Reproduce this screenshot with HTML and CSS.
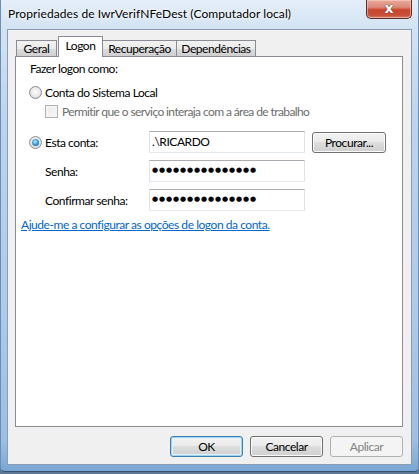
FILE: index.html
```html
<!DOCTYPE html>
<html lang="pt">
<head>
<meta charset="utf-8">
<title>Propriedades</title>
<link rel="stylesheet" href="styles.css">
</head>
<body>
<div class="window">
  <div class="titlebar">
    <span class="title">Propriedades de IwrVerifNFeDest (Computador local)</span>
    <div class="close"><span>x</span></div>
  </div>
  <div class="client">
    <div class="tabs">
      <div class="tab t-geral">Geral</div>
      <div class="tab sel t-logon">Logon</div>
      <div class="tab t-rec">Recuperação</div>
      <div class="tab t-dep">Dependências</div>
    </div>
    <div class="panel">
      <div class="heading">Fazer logon como:</div>
      <div class="opt first">
        <span class="radio"></span><span>Conta do Sistema Local</span>
      </div>
      <div class="opt check">
        <span class="box"></span><span class="dis">Permitir que o serviço interaja com a área de trabalho</span>
      </div>
      <div class="form">
        <div class="opt lbl"><span class="radio on"></span><span>Esta conta:</span></div>
        <div class="input">.\RICARDO</div>
        <button class="btn browse">Procurar...</button>
        <div class="lbl sub">Senha:</div>
        <div class="input pw">●●●●●●●●●●●●●●●</div>
        <div></div>
        <div class="lbl sub">Confirmar senha:</div>
        <div class="input pw">●●●●●●●●●●●●●●●</div>
        <div></div>
      </div>
      <a class="link" href="#">Ajude-me a configurar as opções de logon da conta.</a>
    </div>
    <div class="actions">
      <button class="btn def">OK</button>
      <button class="btn">Cancelar</button>
      <button class="btn disabled">Aplicar</button>
    </div>
  </div>
</div>
</body>
</html>
```

FILE: styles.css
```css
html, body {
  margin: 0;
  padding: 0;
  background: #5d7795;
}
body {
  font-family: Lato, "Open Sans", sans-serif;
  font-size: 12px;
  color: #000;
}
.window {
  width: 419px;
  height: 472px;
  box-sizing: border-box;
  background: linear-gradient(to bottom, #e4eef9 0px, #d3e3f3 28px, #bcd4ee 120px, #aecbea 300px, #9dbfe4 440px, #7ba7d6 470px);
  border-bottom: 1px solid #34506f;
  border-left: 1px solid #6f8db0;
  border-right: 1px solid #6f8db0;
  border-radius: 0 0 5px 5px;
  display: flex;
  flex-direction: column;
}
.titlebar {
  height: 29px;
  display: flex;
  align-items: flex-start;
}
.title {
  padding: 6px 0 0 7px;
  line-height: 15px;
  letter-spacing: 0.08px;
  color: #000;
  text-shadow: 0 0 6px #fff, 0 0 3px #fff;
}
.close {
  margin-left: auto;
  margin-right: 6px;
  width: 46px;
  height: 19px;
  box-sizing: border-box;
  border: 1px solid #5b2b27;
  border-top: none;
  border-radius: 0 0 5px 5px;
  background: linear-gradient(to bottom, #e9a99b 0%, #dc8a78 40%, #c9452d 55%, #c8503a 85%, #d9826b 100%);
  box-shadow: inset 0 0 0 1px rgba(255, 220, 210, 0.5);
  display: flex;
  align-items: center;
  justify-content: center;
}
.close span {
  font-family: "DejaVu Sans", sans-serif;
  font-weight: bold;
  font-size: 14px;
  line-height: 14px;
  color: #fff;
  margin-top: -3px;
  text-shadow: 0 0 1px #5b2b27, 0 0 1px #5b2b27;
}
.client {
  margin: 0 6px;
  height: 436px;
  box-sizing: border-box;
  background: #f0f0f0;
  border: 1px solid #8a9bb2;
  padding: 6px 8px 0 7px;
  letter-spacing: -0.45px;
}
.tabs {
  height: 20px;
  display: flex;
  align-items: flex-end;
  padding-left: 1px;
  position: relative;
  z-index: 1;
}
.tab {
  height: 16px;
  box-sizing: border-box;
  border: 1px solid #898c95;
  border-bottom: none;
  border-left: none;
  background: linear-gradient(to bottom, #f2f2f2, #ebebeb 50%, #dddddd 51%, #cfcfcf);
  line-height: 15px;
  text-align: center;
  color: #000;
}
.t-geral { width: 41px; border-left: 1px solid #898c95; }
.t-logon { width: 45px; margin-left: 1px; }
.t-rec { width: 74px; }
.t-dep { width: 79px; }
.tab.sel {
  height: 21px;
  margin-bottom: -1px;
  border-left: 1px solid #898c95;
  background: #fff;
  line-height: 17px;
}
.panel {
  height: 371px;
  box-sizing: border-box;
  border: 1px solid #898c95;
  background: #fff;
  padding: 4px 0 0 0;
  display: flex;
  flex-direction: column;
  align-items: flex-start;
}
.heading {
  margin-left: 14px;
  line-height: 15px;
}
.opt {
  display: flex;
  align-items: center;
  line-height: 15px;
}
.opt.first {
  margin-left: 13px;
  margin-top: 9px;
}
.opt.check {
  margin-left: 29px;
  margin-top: 4px;
}
.radio {
  width: 13px;
  height: 13px;
  box-sizing: border-box;
  border-radius: 50%;
  border: 1px solid #8e8f8f;
  background: radial-gradient(circle at 50% 45%, #fdfdfd 0%, #ececec 45%, #c9c9c9 100%);
  margin-right: 3px;
  display: flex;
  align-items: center;
  justify-content: center;
  flex: none;
}
.radio.on::after {
  content: "";
  width: 7px;
  height: 7px;
  border-radius: 50%;
  background: radial-gradient(circle at 45% 40%, #b8ecff 0%, #3fa6e8 45%, #1c5f9e 80%, #0e3a66 100%);
}
.box {
  width: 13px;
  height: 13px;
  box-sizing: border-box;
  border: 1px solid #b1b1b1;
  background: linear-gradient(135deg, #e6e6e6, #fafafa);
  box-shadow: inset 0 0 0 2px #f4f4f4;
  margin-right: 4px;
  flex: none;
}
.dis {
  color: #6d6d6d;
  letter-spacing: -0.6px;
}
.form {
  margin-top: 12px;
  margin-left: 13px;
  display: grid;
  grid-template-columns: 113px 156px 74px;
  grid-template-rows: 22px 22px 22px;
  column-gap: 7px;
  row-gap: 7px;
  align-items: center;
}
.lbl {
  line-height: 15px;
}
.sub {
  padding-left: 16px;
}
.input {
  height: 22px;
  box-sizing: border-box;
  border: 1px solid #e2e3ea;
  border-top-color: #abadb3;
  border-bottom-color: #e3e9ef;
  background: #fff;
  padding-left: 2px;
  line-height: 19px;
  white-space: nowrap;
  overflow: hidden;
}
.input.pw {
  font-family: "DejaVu Sans", sans-serif;
  font-size: 7px;
  letter-spacing: 0.9px;
  padding-left: 2px;
}
.btn {
  font-family: inherit;
  font-size: 12px;
  letter-spacing: -0.45px;
  color: #000;
  height: 21px;
  width: 73px;
  padding: 0;
  box-sizing: border-box;
  border: 1px solid #707070;
  border-radius: 3px;
  background: linear-gradient(to bottom, #f2f2f2 0%, #ebebeb 45%, #dddddd 50%, #cfcfcf 100%);
  box-shadow: inset 0 0 0 1px #fbfbfb;
  line-height: 17px;
}
.btn.browse {
  width: 74px;
  height: 21px;
  margin-top: 1px;
}
.btn.def {
  border-color: #3c7fb1;
  box-shadow: inset 0 0 0 1px #9fd3f2, inset 0 0 0 2px #e4f3fb;
}
.btn.disabled {
  border-color: #adb2b5;
  background: #f4f4f4;
  color: #838383;
  box-shadow: none;
}
.link {
  margin-top: 6px;
  margin-left: 5px;
  color: #0066cc;
  text-decoration: underline;
  line-height: 15px;
}
.actions {
  margin-top: 9px;
  display: flex;
  justify-content: flex-end;
  column-gap: 7px;
}
```
